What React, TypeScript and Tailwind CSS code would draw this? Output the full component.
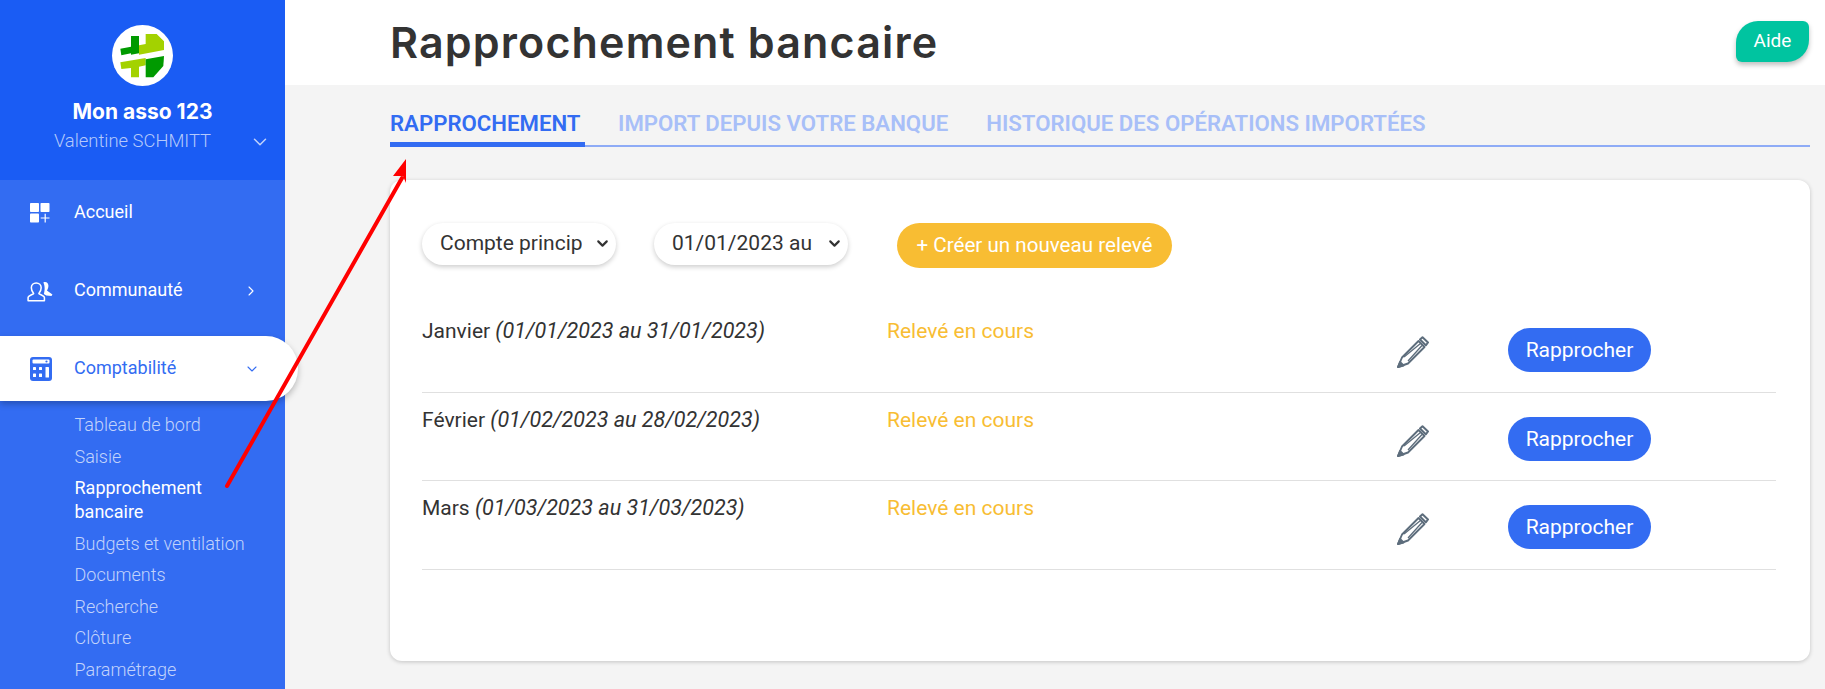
import { ChevronDown, ChevronRight } from 'lucide-react'

const subItems = ['Tableau de bord', 'Saisie', 'Rapprochement bancaire', 'Budgets et ventilation', 'Documents', 'Recherche', 'Clôture', 'Paramétrage']

const releves = [
  { name: 'Janvier', period: '(01/01/2023 au 31/01/2023)' },
  { name: 'Février', period: '(01/02/2023 au 28/02/2023)' },
  { name: 'Mars', period: '(01/03/2023 au 31/03/2023)' },
]

function Logo() {
  return (
    <svg viewBox="336 75 183 183" className="w-[61px] h-[61px]">
      <circle cx="427.5" cy="166.5" r="91.5" fill="#fff" />
      <path d="M417 136L437 132V102H470L492 124V150L417 164Z" fill="#a3d200" />
      <path d="M393 108H417V160L393 164V160L364 166L361 146L393 140Z" fill="#009a00" />
      <path d="M361 187L437 174V196L417 200V232H393V204L364 207Z" fill="#a3d200" />
      <path d="M437 178L492 168L490 198L460 232H437Z" fill="#009a00" />
    </svg>
  )
}

function HomeIcon() {
  return (
    <svg viewBox="0 0 20 20" className="w-5 h-5" fill="#fff">
      <rect x="0" y="0" width="9" height="9" rx="0.8" />
      <rect x="10.5" y="0" width="9" height="9" rx="0.8" />
      <rect x="0" y="10.5" width="9" height="9" rx="0.8" />
      <path d="M14.6 10.8h1.2v3.6h3.7v1.2h-3.7v3.8h-1.2v-3.8h-3.9v-1.2h3.9z" />
    </svg>
  )
}

function CommunityIcon() {
  return (
    <svg viewBox="0 0 28 22" className="w-[27px] h-[21px]">
      <path d="M17 1.5c3-1.3 5.2.6 5.3 3.5 0 2-.9 4-1.6 5l5.8 4.2-1 1.5-5.4-.6-2.6-1.6c1-3 1.5-8-.5-12z" fill="#fff" />
      <path d="M1 20.8v-3.4c0-2 4.4-3 5.8-4.2-1.6-1.8-2.4-3.8-2.4-6C4.4 4 6.6 2 9.5 2s5.2 2 5.2 5.2c0 2.2-.8 4.2-2.4 6 1.4 1.2 5.8 2.2 5.8 4.2v3.4z" fill="none" stroke="#fff" strokeWidth="1.6" strokeLinejoin="round" />
    </svg>
  )
}

function CalcIcon() {
  return (
    <svg viewBox="0 0 22 24" className="w-[22px] h-6">
      <rect x="0" y="0" width="22" height="24" rx="3" fill="#336cf2" />
      <rect x="2.5" y="2.5" width="17" height="4" rx="1" fill="#fff" />
      <circle cx="16.5" cy="4.5" r="1.1" fill="#336cf2" />
      <g fill="#fff">
        <rect x="3" y="10" width="3" height="3" rx=".6" />
        <rect x="9" y="10" width="3" height="3" rx=".6" />
        <rect x="15.5" y="10" width="3.5" height="10.5" rx=".6" />
        <rect x="3" y="16.5" width="3" height="3.5" rx=".6" />
        <rect x="9" y="16.5" width="3" height="3.5" rx=".6" />
      </g>
    </svg>
  )
}

function PencilIcon() {
  return (
    <svg viewBox="0 0 32 32" className="w-8 h-8" fill="none" stroke="#5d6d7c" strokeWidth="1.9" strokeLinejoin="round">
      <path d="M1 31L5 21.5L21.5 5L27.5 11L11 27.5Z" />
      <path d="M7 21L23.5 7.5M11 25L25 9.5" strokeWidth="1.3" />
      <path d="M1 31L3 26L6.5 29.5Z" fill="#5d6d7c" />
      <path d="M23 3.5L25.5 1.2L31 6.5L28.8 9.3Z" strokeWidth="2" />
    </svg>
  )
}

function PillSelect({ label }: { label: string }) {
  return (
    <div className="relative w-[194px] h-[42px]">
      <select className="appearance-none w-full h-full rounded-full bg-white shadow-[0_2px_5px_rgba(0,0,0,0.2)] pl-[18px] pr-[34px] text-[21px] text-[#333]">
        <option>{label}</option>
      </select>
      <ChevronDown className="absolute right-[5px] top-[12px] w-[17px] h-[17px] text-[#333] pointer-events-none" strokeWidth={3} />
    </div>
  )
}

function Sidebar() {
  return (
    <aside className="w-[285px] shrink-0 h-full flex flex-col bg-[#336cf2] font-['Roboto',sans-serif]">
      <div className="h-[180px] shrink-0 bg-[#1a5cf4] flex flex-col items-center pt-[25px] relative">
        <Logo />
        <div className="mt-[12px] text-[21px] leading-[28px] font-bold text-white font-['Inter',sans-serif]">Mon asso 123</div>
        <div className="mt-[3px] mr-[20px] text-[18.4px] leading-6 font-light text-[#b4c9fb]">Valentine SCHMITT</div>
        <ChevronDown className="absolute right-[14px] top-[131px] w-[22px] h-[22px] text-[#c2d3fb]" strokeWidth={1.6} />
      </div>
      <nav className="flex flex-col pt-[21px]">
        <a className="h-[24px] flex items-center text-white text-[18px] pl-[30px]">
          <span className="w-[44px] flex"><HomeIcon /></span>
          <span className="pb-[3px]">Accueil</span>
        </a>
        <a className="mt-[54px] h-[24px] flex items-center text-white text-[18px] pl-[27px] pr-[26px]">
          <span className="w-[47px] flex"><CommunityIcon /></span>
          <span className="flex-1 pb-[3px]">Communauté</span>
          <ChevronRight className="w-[16px] h-[16px]" strokeWidth={1.6} />
        </a>
        <a className="mt-[33px] h-[65px] relative z-10 -mr-[13px] flex items-center bg-white rounded-r-[32px] shadow-[0_3px_6px_rgba(0,0,0,0.25)] text-[#336cf2] text-[18px] pl-[30px] pr-[38px]">
          <span className="w-[44px] flex"><CalcIcon /></span>
          <span className="flex-1 pb-[2px]">Comptabilité</span>
          <ChevronDown className="w-[16px] h-[16px]" strokeWidth={1.6} />
        </a>
        <ul className="pt-[12px] pl-[74.5px] pr-[30px] flex flex-col gap-[7.5px] text-[18px] leading-[24px] font-light text-[#c2d3fb]">
          {subItems.map((s) => (
            <li key={s} className={s === 'Rapprochement bancaire' ? 'text-white font-normal' : ''}>{s}</li>
          ))}
        </ul>
      </nav>
    </aside>
  )
}

function Row({ name, period }: { name: string; period: string }) {
  return (
    <div className="h-[88.5px] flex border-b border-[#e0e0e0] text-[21px] leading-[24px] text-[#333]">
      <div className="w-[465px] pt-[15px]">
        {name} <em className="text-[21.5px]">{period}</em>
      </div>
      <div className="w-[510px] pt-[15px] text-[#f8bd33]">Relevé en cours</div>
      <div className="w-[111px] pt-[32px]"><PencilIcon /></div>
      <div className="pt-[24px]">
        <button className="h-[44px] w-[143px] rounded-full bg-[#336cf2] text-white text-[21px]">Rapprocher</button>
      </div>
    </div>
  )
}

export default function App() {
  return (
    <div className="relative h-[689px] w-full flex overflow-hidden bg-[#f4f4f4] font-['Roboto',sans-serif]">
      <Sidebar />
      <main className="flex-1 min-w-0">
        <header className="h-[85px] bg-white pl-[105px] pr-[16px] flex justify-between">
          <h1 className="pt-[14px] text-[43px] leading-[56px] font-semibold text-[#333] font-['Inter',sans-serif] tracking-[1.15px]">Rapprochement bancaire</h1>
          <button className="mt-[21px] h-[41px] w-[73px] bg-[#00c4a0] text-white text-[19px] rounded-tl-[22px] rounded-tr-[6px] rounded-br-[22px] rounded-bl-[6px] shadow-[0_3px_5px_rgba(0,0,0,0.25)]">Aide</button>
        </header>
        <div className="pl-[105px] pr-[15px]">
          <div className="mt-[24px] flex gap-[38px] h-[38px] border-b-2 border-[#8eabf6] text-[22.2px] leading-[28px] font-semibold text-[#a8bff8]">
            <div className="w-[195px] h-[33px] -mr-[5px] text-[#336cf2] border-b-[5px] border-[#336cf2] box-content">RAPPROCHEMENT</div>
            <div>IMPORT DEPUIS VOTRE BANQUE</div>
            <div>HISTORIQUE DES OPÉRATIONS IMPORTÉES</div>
          </div>
          <section className="mt-[33px] h-[481px] bg-white rounded-[12px] shadow-[0_1px_4px_rgba(0,0,0,0.2)] pt-[43px] px-[32px] pr-[34px]">
            <div className="flex items-start">
              <PillSelect label="Compte principal" />
              <div className="ml-[38px]">
                <PillSelect label="01/01/2023 au 31/12/2023" />
              </div>
              <button className="ml-[49px] w-[275px] h-[45px] rounded-full bg-[#f8bd33] text-white text-[20.6px]">+ Créer un nouveau relevé</button>
            </div>
            <div className="mt-[36px]">
              {releves.map((r) => (
                <Row key={r.name} {...r} />
              ))}
            </div>
          </section>
        </div>
      </main>
      <svg viewBox="0 0 1825 689" className="absolute inset-0 w-[1825px] h-[689px] z-20 pointer-events-none">
        <line x1="227" y1="486" x2="402" y2="178" stroke="#f00" strokeWidth="4" strokeLinecap="round" />
        <path d="M406 159L393 176L403 176L406 183Z" fill="#f00" />
      </svg>
    </div>
  )
}
